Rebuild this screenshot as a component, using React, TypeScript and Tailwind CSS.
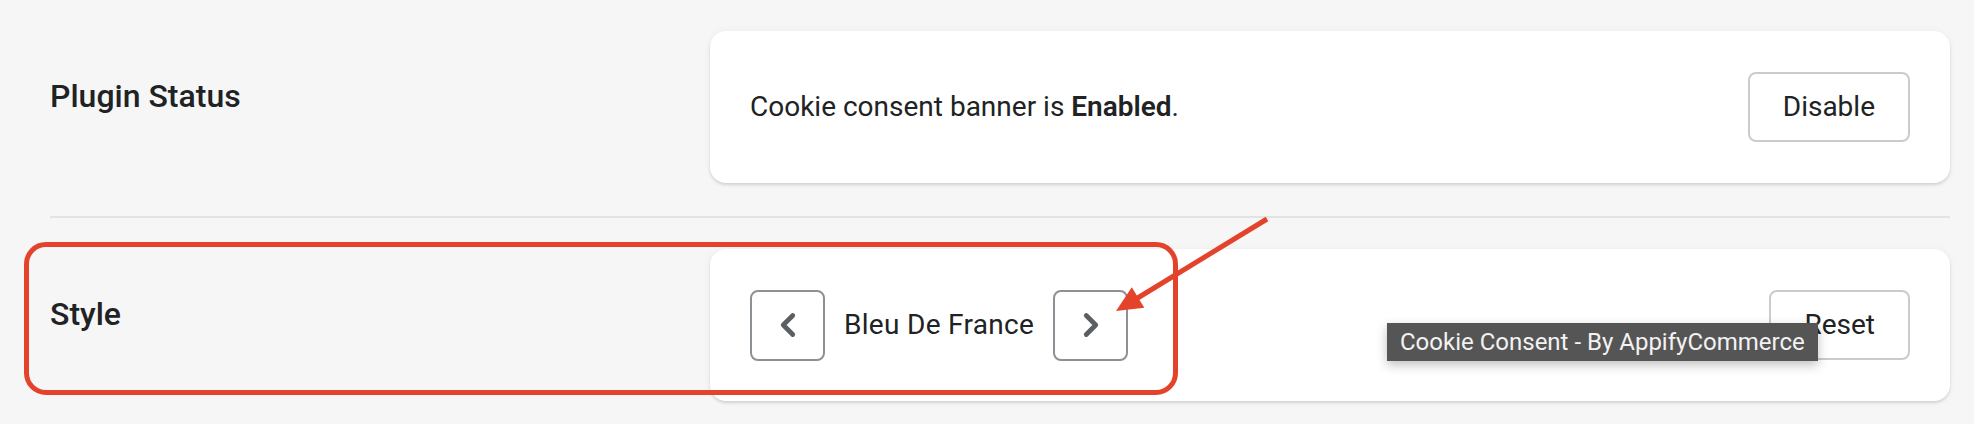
import { ChevronLeft, ChevronRight } from "lucide-react";

function Card({ children }: { children: React.ReactNode }) {
    return (
        <div className="flex-1 h-[152px] flex items-center justify-between px-[40px] bg-white rounded-[16px] shadow-[0_2px_3px_rgba(0,0,0,0.13),0_0_8px_rgba(23,24,24,0.04)]">
            {children}
        </div>
    );
}

function PlainButton({ label }: { label: string }) {
    return (
        <button className="h-[70px] px-[33px] border-2 border-[#c9cccf] rounded-[8px] bg-white text-[28px] text-[#202223]">
            {label}
        </button>
    );
}

function NavButton({ dir }: { dir: "prev" | "next" }) {
    return (
        <button className="w-[75px] h-[71px] flex items-center justify-center border-2 border-[#8c9196] rounded-[8px] bg-white text-[#5c5f62]">
            {dir === "prev" ? (
                <ChevronLeft className="w-[38px] h-[38px]" strokeWidth={3} />
            ) : (
                <ChevronRight className="w-[38px] h-[38px]" strokeWidth={3} />
            )}
        </button>
    );
}

export default function App() {
    return (
        <div
            className="relative w-[1974px] h-[424px] overflow-hidden bg-[#f6f6f7] text-[#202223] pl-[50px] pr-[24px] pt-[31px]"
            style={{ fontFamily: "Roboto, 'Liberation Sans', sans-serif" }}
        >
            {/* Plugin status row */}
            <div className="flex">
                <div className="w-[660px] pt-[45px]">
                    <h2 className="text-[32px] leading-[40px] font-medium">Plugin Status</h2>
                </div>
                <Card>
                    <p className="text-[28px]">
                        Cookie consent banner is <span className="font-semibold">Enabled</span>.
                    </p>
                    <PlainButton label="Disable" />
                </Card>
            </div>

            <div className="mt-[33px] h-[2px] bg-[#e1e3e5]" />

            {/* Style row */}
            <div className="flex mt-[31px]">
                <div className="w-[660px] pt-[45px]">
                    <h2 className="text-[32px] leading-[40px] font-medium">Style</h2>
                </div>
                <Card>
                    <div className="flex items-center gap-[19px]">
                        <NavButton dir="prev" />
                        <span className="text-[28px] tracking-[0.3px]">Bleu De France</span>
                        <NavButton dir="next" />
                    </div>
                    <PlainButton label="Reset" />
                </Card>
            </div>

            {/* tooltip */}
            <div className="absolute left-[1387px] top-[323px] h-[38px] flex items-center px-[13px] bg-[#555555] text-[#f2f2f2] text-[24px] shadow-[0_4px_10px_rgba(0,0,0,0.25)]">
                Cookie Consent - By AppifyCommerce
            </div>

            {/* annotation */}
            <div className="absolute left-[24px] top-[242px] w-[1154px] h-[153px] border-[5px] border-[#e4432b] rounded-[22px]" />
            <svg className="absolute inset-0 w-full h-full pointer-events-none" viewBox="0 0 1974 424">
                <line x1="1267" y1="219" x2="1136" y2="299" stroke="#e4432b" strokeWidth="5" />
                <polygon points="1116,311 1131.8,287.3 1144.3,307.8" fill="#e4432b" />
            </svg>
        </div>
    );
}
